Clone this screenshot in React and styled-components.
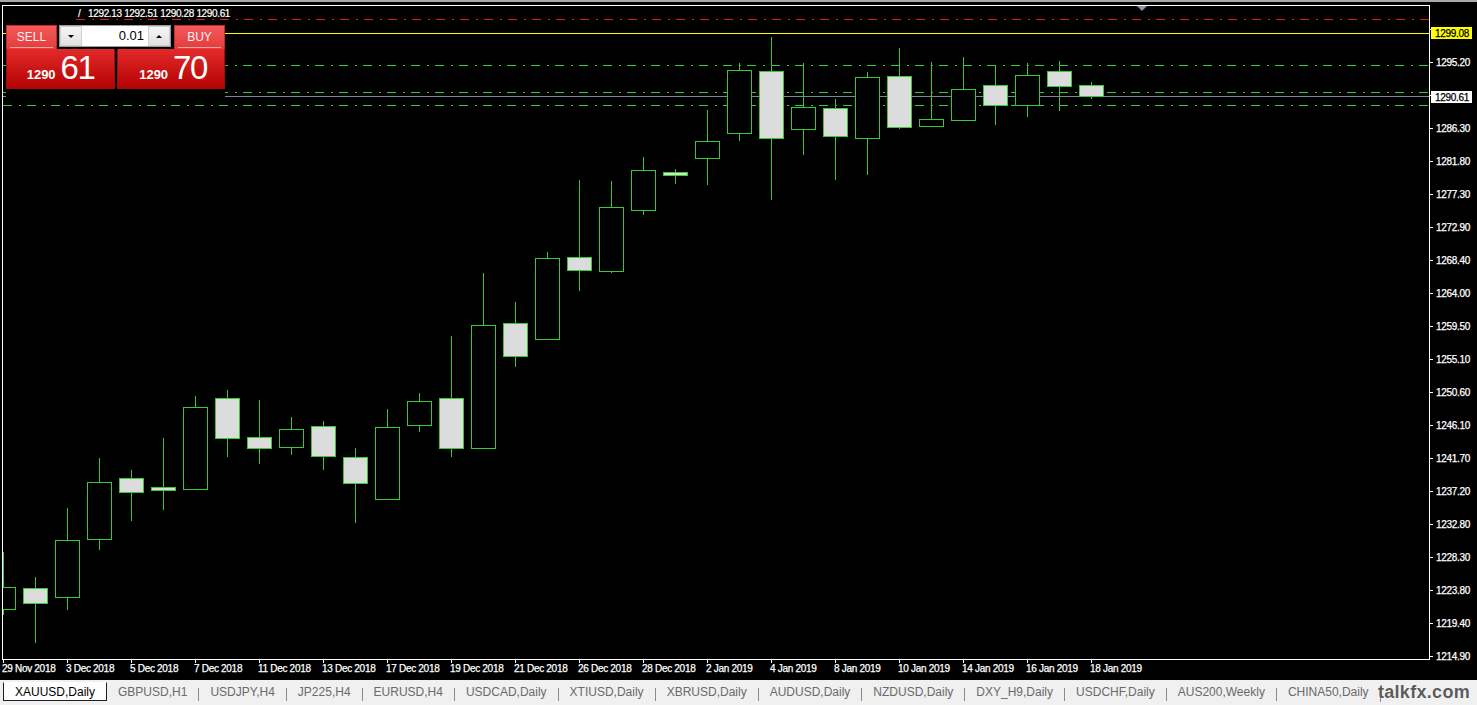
import styled, { createGlobalStyle } from "styled-components";

const GlobalStyle = createGlobalStyle`
  html, body {
    margin: 0;
    padding: 0;
    background: #000;
  }
  body {
    font-family: "Liberation Sans", Arial, sans-serif;
    overflow: hidden;
  }
`;

const GREEN = "#32cd32";
const BODY_WHITE = "#dcdcdc";

// y in px for a price on the right scale
const priceY = (p) => 656 - (p - 1214.9) * 7.397;

// [high, bodyTop, bodyBottom, low, whiteBody] in chart px
const candles = [
  [552, 587, 609, 615, 0],
  [577, 588, 603, 643, 1],
  [508, 540, 597, 610, 0],
  [458, 482, 539, 550, 0],
  [470, 478, 492, 521, 1],
  [438, 487, 490, 510, 1],
  [396, 407, 489, 489, 0],
  [390, 398, 438, 457, 1],
  [400, 437, 448, 464, 1],
  [417, 429, 447, 455, 0],
  [421, 426, 456, 470, 1],
  [448, 457, 483, 523, 1],
  [409, 427, 499, 499, 0],
  [393, 401, 425, 432, 0],
  [336, 398, 448, 457, 1],
  [273, 325, 448, 449, 0],
  [302, 323, 356, 367, 1],
  [252, 258, 339, 339, 0],
  [180, 257, 270, 291, 1],
  [181, 207, 271, 273, 0],
  [157, 170, 210, 215, 0],
  [169, 172, 175, 184, 1],
  [110, 141, 158, 185, 0],
  [63, 70, 133, 141, 0],
  [37, 71, 138, 200, 1],
  [63, 107, 129, 155, 0],
  [99, 108, 136, 180, 1],
  [72, 77, 138, 175, 0],
  [48, 76, 127, 129, 1],
  [62, 119, 126, 126, 0],
  [57, 89, 120, 120, 0],
  [65, 85, 105, 125, 1],
  [63, 75, 105, 117, 0],
  [61, 71, 86, 111, 1],
  [82, 85, 96, 99, 1],
];

// levels shown on the scale; 1290.70 and 1299.60 sit under the price tags
const scale = [
  1214.9, 1219.4, 1223.8, 1228.3, 1232.8, 1237.2, 1241.7, 1246.1, 1250.6,
  1255.1, 1259.5, 1264.0, 1268.4, 1272.9, 1277.3, 1281.8, 1286.3, 1295.2,
];
const hiddenTicks = [1290.7, 1299.6];

const dates = [
  "29 Nov 2018", "3 Dec 2018", "5 Dec 2018", "7 Dec 2018", "11 Dec 2018",
  "13 Dec 2018", "17 Dec 2018", "19 Dec 2018", "21 Dec 2018", "26 Dec 2018",
  "28 Dec 2018", "2 Jan 2019", "4 Jan 2019", "8 Jan 2019", "10 Jan 2019",
  "14 Jan 2019", "16 Jan 2019", "18 Jan 2019",
];

const tabs = [
  "GBPUSD,H1", "USDJPY,H4", "JP225,H4", "EURUSD,H4", "USDCAD,Daily",
  "XTIUSD,Daily", "XBRUSD,Daily", "AUDUSD,Daily", "NZDUSD,Daily",
  "DXY_H9,Daily", "USDCHF,Daily", "AUS200,Weekly", "CHINA50,Daily",
];

const DASH = "9 7 2 6";

export default function App() {
  return (
    <>
      <GlobalStyle />
      <Page>
        <ChartArea>
          <Chart />
          <TradePanel>
            <TopRow>
              <SideHead>SELL</SideHead>
              <LotBox>
                <SpinButton><Arrow $dir="down" /></SpinButton>
                <LotValue>0.01</LotValue>
                <SpinButton><Arrow $dir="up" /></SpinButton>
              </LotBox>
              <SideHead $buy>BUY</SideHead>
            </TopRow>
            <PriceRow>
              <PriceBox>
                <Small>1290</Small>
                <Big>61</Big>
              </PriceBox>
              <PriceBox $buy>
                <Small>1290</Small>
                <Big>70</Big>
              </PriceBox>
            </PriceRow>
            <PanelShade />
          </TradePanel>
        </ChartArea>
        <TabBar>
          <Tab $active>XAUUSD,Daily</Tab>
          {tabs.map((t, i) => (
            <TabGroup key={t}>
              {i > 0 && <Sep />}
              <Tab>{t}</Tab>
            </TabGroup>
          ))}
          <Sep />
          <Watermark>talkfx.com</Watermark>
        </TabBar>
      </Page>
    </>
  );
}

function Chart() {
  return (
    <ChartSvg viewBox="0 2 1477 678" width="1477" height="678">
      <defs>
        <clipPath id="plot">
          <rect x="3" y="6" width="1426" height="653" />
        </clipPath>
      </defs>

      {/* level lines */}
      <line x1="76" y1="19.5" x2="1429" y2="19.5" stroke="#e81818" strokeDasharray={DASH} />
      <line x1="3" y1="33.5" x2="1429" y2="33.5" stroke="#ffff00" />
      <line x1="3" y1="65.5" x2="1429" y2="65.5" stroke={GREEN} strokeDasharray={DASH} />
      <line x1="3" y1="92.5" x2="1429" y2="92.5" stroke={GREEN} strokeDasharray={DASH} />
      <line x1="3" y1="96.5" x2="1429" y2="96.5" stroke="#778899" />
      <line x1="3" y1="105.5" x2="1429" y2="105.5" stroke={GREEN} strokeDasharray={DASH} />

      <g clipPath="url(#plot)">
        {candles.map(([h, t, b, l, w], i) => {
          const c = 3 + 32 * i + 0.5;
          return (
            <g key={i}>
              <line x1={c} y1={h} x2={c} y2={l} stroke={GREEN} />
              <rect
                x={c - 12}
                y={t + 0.5}
                width="24"
                height={Math.max(b - t, 1)}
                fill={w ? BODY_WHITE : "#000"}
                stroke={GREEN}
              />
            </g>
          );
        })}
      </g>

      {/* frame */}
      <rect x="2.5" y="5.5" width="1427" height="654" fill="none" stroke="#fff" />
      <polygon points="1137,6 1147,6 1142,11" fill="#8a96a3" />

      {/* ohlc header */}
      <rect x="76" y="6" width="155" height="13" fill="#000" />
      <HeaderText x="78" y="16.5">/</HeaderText>
      <HeaderText x="88" y="16.5">1292.13 1292.51 1290.28 1290.61</HeaderText>

      {/* price scale */}
      {hiddenTicks.map((p) => {
        const y = Math.round(priceY(p)) + 0.5;
        return <line key={p} x1="1430" y1={y} x2="1433" y2={y} stroke="#fff" />;
      })}
      {scale.map((p) => {
        const y = Math.round(priceY(p)) + 0.5;
        return (
          <g key={p}>
            <line x1="1430" y1={y} x2="1433" y2={y} stroke="#fff" />
            <AxisText x="1436" y={y + 3.5}>{p.toFixed(2)}</AxisText>
          </g>
        );
      })}
      <rect x="1431" y="27" width="41" height="12" fill="#ffff00" />
      <AxisText x="1435" y="36.5" $dark>1299.08</AxisText>
      <rect x="1431" y="91" width="41" height="12" fill="#fff" />
      <AxisText x="1435" y="100.5" $dark>1290.61</AxisText>

      {/* time scale */}
      {dates.map((d, i) => {
        const x = 3 + 64 * i + 0.5;
        return (
          <g key={d}>
            <line x1={x} y1="660" x2={x} y2="663" stroke="#fff" />
            <AxisText x={x - 1.5} y="671.5">{d}</AxisText>
          </g>
        );
      })}
    </ChartSvg>
  );
}

const Page = styled.div`
  width: 1477px;
  height: 705px;
  display: flex;
  flex-direction: column;
  background: #000;
`;

const ChartArea = styled.div`
  position: relative;
  height: 680px;
  border-top: 2px solid #a8a8a8;
  box-sizing: border-box;
`;

const ChartSvg = styled.svg`
  display: block;
`;

const HeaderText = styled.text`
  fill: #fff;
  stroke: #fff;
  stroke-width: 0.2px;
  font-size: 10px;
  letter-spacing: -0.35px;
  font-family: "Liberation Sans", Arial, sans-serif;
`;

const AxisText = styled.text`
  fill: ${(p) => (p.$dark ? "#000" : "#fff")};
  stroke: ${(p) => (p.$dark ? "#000" : "#fff")};
  stroke-width: 0.25px;
  font-size: 10px;
  letter-spacing: -0.3px;
  font-family: "Liberation Sans", Arial, sans-serif;
`;

const TradePanel = styled.div`
  position: absolute;
  top: 23px;
  left: 6px;
  width: 219px;
  background: #000;
  display: flex;
  flex-direction: column;
`;

const TopRow = styled.div`
  display: flex;
  height: 24px;
`;

const SideHead = styled.div`
  position: relative;
  width: 51px;
  margin-left: ${(p) => (p.$buy ? "3px" : "0")};
  box-sizing: border-box;
  background: linear-gradient(#f45a5a, #e33c3c);
  border: 1px solid #c42a2a;
  border-bottom: none;
  color: #fff3f3;
  font-size: 12px;
  display: flex;
  align-items: center;
  justify-content: center;
  padding-bottom: 1px;

  &::after {
    content: "";
    position: absolute;
    left: 3px;
    right: 3px;
    bottom: 1px;
    height: 1px;
    background: #f2a4a4;
  }
`;

const LotBox = styled.div`
  display: flex;
  width: 112px;
  height: 22px;
  margin-left: 2px;
  box-sizing: border-box;
  border: 1px solid #9c9c9c;
  background: #fff;
`;

const SpinButton = styled.div`
  width: 22px;
  background: linear-gradient(#f6f6f6, #e2e2e2);
  border: 1px solid #d0d0d0;
  box-sizing: border-box;
  display: flex;
  align-items: center;
  justify-content: center;
`;

const Arrow = styled.span`
  width: 0;
  height: 0;
  border-left: 3px solid transparent;
  border-right: 3px solid transparent;
  ${(p) =>
    p.$dir === "down"
      ? "border-top: 3px solid #000;"
      : "border-bottom: 3px solid #000;"}
`;

const LotValue = styled.div`
  flex: 1;
  text-align: right;
  padding-right: 4px;
  font-size: 13px;
  line-height: 20px;
  color: #000;
`;

const PriceRow = styled.div`
  display: flex;
  gap: 2px;
  height: 40px;
`;

const PriceBox = styled.div`
  width: ${(p) => (p.$buy ? "108px" : "109px")};
  box-sizing: border-box;
  background: linear-gradient(#e42a2a, #b40202);
  border: 1px solid #9e0c0c;
  border-top: none;
  display: flex;
  align-items: baseline;
  justify-content: center;
  padding-left: ${(p) => (p.$buy ? "4px" : "0")};
  color: #fff;
`;

const Small = styled.span`
  font-size: 13px;
  font-weight: bold;
  margin-right: 5px;
`;

const Big = styled.span`
  font-size: 33px;
  line-height: 37px;
  letter-spacing: -1.5px;
`;

const PanelShade = styled.div`
  width: 93px;
  height: 9px;
  margin-left: 6px;
  margin-top: 1px;
  background: #000;
`;

const TabBar = styled.div`
  position: relative;
  flex: 1;
  display: flex;
  align-items: flex-start;
  background: #f0f0f0;
  padding-left: 3px;
  overflow: hidden;
`;

const TabGroup = styled.div`
  display: flex;
  align-items: center;
  height: 19px;
  margin-top: 2px;
`;

const Tab = styled.div`
  height: 19px;
  margin-top: ${(p) => (p.$active ? "2px" : "0")};
  box-sizing: border-box;
  padding: 0 ${(p) => (p.$active ? "11px" : "10px")};
  font-size: 12px;
  line-height: 18px;
  white-space: nowrap;
  color: ${(p) => (p.$active ? "#000" : "#6a6a6a")};
  background: ${(p) => (p.$active ? "#fff" : "transparent")};
  border: 1px solid ${(p) => (p.$active ? "#1e1e1e" : "transparent")};
  border-top-color: ${(p) => (p.$active ? "#fff" : "transparent")};
`;

const Sep = styled.span`
  width: 1px;
  height: 13px;
  margin-top: 5px;
  align-self: center;
  background: #8c8c8c;
`;

const Watermark = styled.div`
  position: absolute;
  right: 7px;
  top: 2px;
  font-size: 18px;
  font-weight: 900;
  letter-spacing: 0.3px;
  color: rgba(60, 60, 60, 0.85);
  text-shadow: 0 0 1px #fff;
`;
